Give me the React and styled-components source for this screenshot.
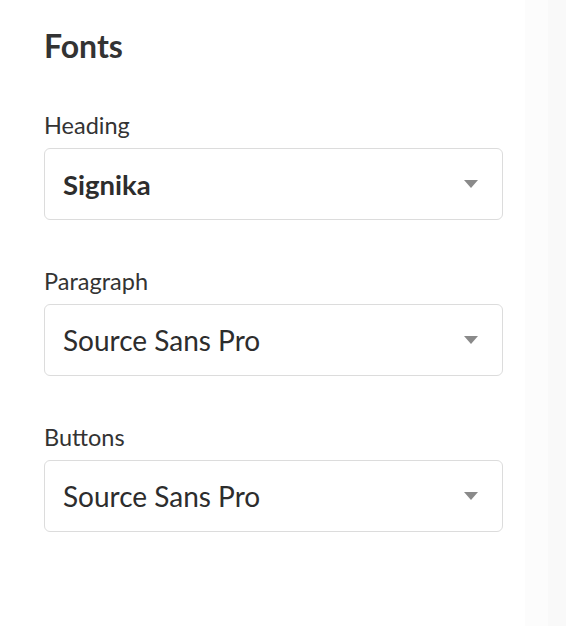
import React from "react";
import styled, { createGlobalStyle } from "styled-components";

const Global = createGlobalStyle`
  html, body { margin: 0; padding: 0; background: #f9f9f9; }
  body { font-family: Lato, "Noto Sans", sans-serif; color: #333; }
`;

const Page = styled.div`
  display: flex;
  min-height: 626px;
`;

const Panel = styled.div`
  width: 525px;
  box-sizing: border-box;
  background: #fff;
  padding: 27px 22px 0 44px;
`;

const Gutter = styled.div`
  width: 23px;
  background: #fcfcfc;
`;

const Title = styled.h2`
  margin: 0 0 46px;
  font-size: 32px;
  font-weight: 700;
  line-height: 38px;
  color: #333;
`;

const Field = styled.div`
  display: flex;
  flex-direction: column;
  margin-bottom: 47px;
`;

const Label = styled.label`
  font-size: 23.5px;
  line-height: 28px;
  color: #333;
  margin-bottom: 9px;
`;

const Select = styled.div`
  height: 72px;
  box-sizing: border-box;
  border: 1px solid #dcdcdc;
  border-radius: 6px;
  display: flex;
  align-items: center;
  justify-content: space-between;
  padding: 0 24px 0 18px;
  font-size: ${(p) => (p.$bold ? "27.5px" : "28px")};
  font-weight: ${(p) => (p.$bold ? 700 : 400)};
  color: #2d2d2d;
`;

const Caret = styled.span`
  width: 0;
  height: 0;
  border-left: 7px solid transparent;
  border-right: 7px solid transparent;
  border-top: 8px solid #8a8a8a;
`;

const fields = [
  { label: "Heading", value: "Signika", bold: true },
  { label: "Paragraph", value: "Source Sans Pro" },
  { label: "Buttons", value: "Source Sans Pro" },
];

export default function App() {
  return (
    <Page>
      <Global />
      <Panel>
        <Title>Fonts</Title>
        {fields.map((f) => (
          <Field key={f.label}>
            <Label>{f.label}</Label>
            <Select $bold={f.bold}>
              <span>{f.value}</span>
              <Caret />
            </Select>
          </Field>
        ))}
      </Panel>
      <Gutter />
    </Page>
  );
}
